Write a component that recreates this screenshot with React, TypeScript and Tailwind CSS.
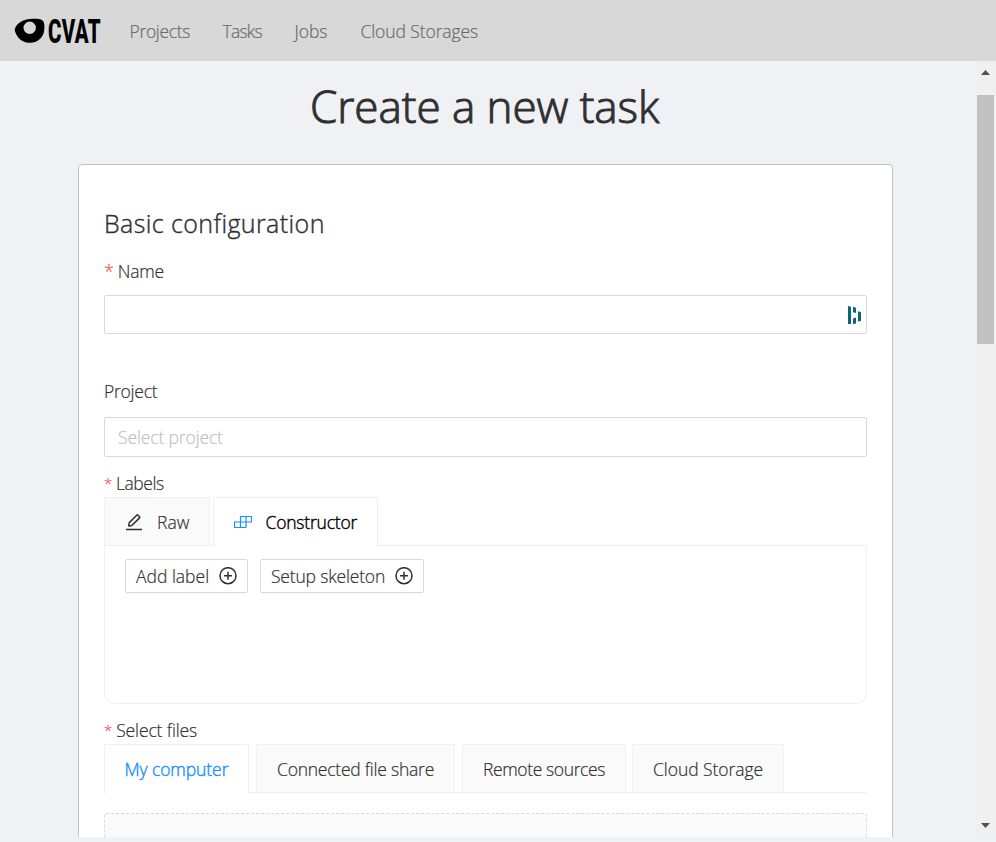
import React from "react";

const navItems = [
  { label: "Projects", cls: "w-[93px] tracking-[-0.33px]" },
  { label: "Tasks", cls: "w-[72px] tracking-[-0.75px]" },
  { label: "Jobs", cls: "w-[66px] tracking-[-0.1px]" },
  { label: "Cloud Storages", cls: "w-[140px] tracking-[-0.1px]" },
];

const fileTabs = [
  { label: "Connected file share", cls: "ml-[7px] w-[199px] tracking-[-0.23px]" },
  { label: "Remote sources", cls: "ml-[7px] w-[164px] tracking-[-0.38px]" },
  { label: "Cloud Storage", cls: "ml-[6px] w-[152px] tracking-[-0.05px]" },
];

function Logo() {
  return (
    <div className="flex h-[61px] w-[129.5px] items-start pl-[14px]">
      <svg className="mt-[18px] h-[26px] w-[31px] shrink-0" viewBox="0 0 31 26">
        <path
          fillRule="evenodd"
          d="M1 10.5C3 5 9 1.6 16 1C21 .6 26 .8 28.3 2.2C30.4 3.6 30.7 8 30.2 12.2C29.5 19.5 23.5 24.8 16 24.8C8.5 24.8 3.2 20.3 1 13.2C.6 12.2 .7 11.4 1 10.5ZM15.7 3.6A6.2 6.2 0 1 0 15.7 16A6.2 6.2 0 1 0 15.7 3.6Z"
        />
      </svg>
      <span className="ml-[3px] mt-[12.5px] origin-left scale-x-[0.62] font-[Roboto] text-[33px] font-extrabold leading-[38px] tracking-[0.5px] text-black">
        CVAT
      </span>
    </div>
  );
}

function PlusCircle() {
  return (
    <svg className="h-[18px] w-[18px] shrink-0" viewBox="0 0 18 18" fill="none" stroke="#303030" strokeWidth="1.5">
      <circle cx="9" cy="8.7" r="8" />
      <path d="M9 4.7v8M5 8.7h8" />
    </svg>
  );
}

function Required({ large = false }: { large?: boolean }) {
  return large ? (
    <span className="mr-[4px] text-[18px] text-[#ff4d4f]">*</span>
  ) : (
    <span className="mr-[4px] text-[15px] text-[#ff4d4f]">*</span>
  );
}

function Scrollbar() {
  return (
    <div className="flex w-[21px] shrink-0 flex-col bg-[#f0f0f0] pl-[2px]">
      <div className="flex h-[34px] justify-center pr-[2px] pt-[9px]">
        <svg className="h-[5px] w-[9px]" viewBox="0 0 9 5"><path d="M0 5L4.5 0L9 5Z" fill="#505050" /></svg>
      </div>
      <div className="h-[249px] w-[17px] bg-[#c1c1c1]" />
      <div className="mt-auto flex h-[15px] justify-center pr-[2px]">
        <svg className="mt-px h-[5px] w-[9px]" viewBox="0 0 9 5"><path d="M0 0L4.5 5L9 0Z" fill="#505050" /></svg>
      </div>
    </div>
  );
}

export default function App() {
  return (
    <div className="h-[842px] w-[996px] overflow-hidden bg-[#f0f1f5] font-['Open_Sans','Noto_Sans',sans-serif] text-[17.5px] font-light text-[#303030] [-webkit-text-stroke-width:0.2px]">
      <header className="flex h-[61px] bg-[#d8d8d8]">
        <Logo />
        <nav className="flex pt-[19px] leading-[25px] text-[#6a6a6a]">
          {navItems.map((n) => (
            <a key={n.label} className={`whitespace-nowrap ${n.cls}`}>{n.label}</a>
          ))}
        </nav>
      </header>

      <div className="flex h-[776px] overflow-hidden">
        <main className="w-[975px] shrink-0 pl-[78px]">
          <h1 className="h-[103px] pl-[232px] pt-[15px] text-[44px] leading-[60px] tracking-[-0.05px] [-webkit-text-stroke-width:1px]">
            <span className="whitespace-nowrap">Create a new task</span>
          </h1>
          <section className="h-[900px] w-[815px] rounded-[4px] border border-[#c1c1c1] bg-white px-[25px] pt-[40px]">
            <h2 className="h-[53px] whitespace-nowrap text-[25px] leading-[36px] tracking-[0.4px] [-webkit-text-stroke-width:0.4px]">Basic configuration</h2>
            <div className="flex h-[37px] leading-[26px] tracking-[-0.2px]"><Required large />Name</div>
            <div className="flex h-[39px] items-center justify-end rounded-[2px] border border-[#d9d9d9] pr-[4px]">
              <svg className="h-[20px] w-[15px]" viewBox="0 0 15 20" fill="#0e6478">
                <path d="M1 1L4 1.7V19H1ZM6 1.7L9 2.8V8L6 7.3ZM11 6.2L14 7.2V15.8L11 16.7ZM6 13.4L9 12.6V18.4L6 19Z" />
              </svg>
            </div>
            <div className="mt-[44px] h-[39px] leading-[26px] tracking-[-0.25px]">Project</div>
            <div className="h-[40px] rounded-[2px] border border-[#d9d9d9] pl-[13px] leading-[39px] tracking-[-0.13px] text-[#bfbfbf]">Select project</div>
            <div className="mt-[13px] flex h-[27px] leading-[26px] tracking-[-0.4px]"><Required />Labels</div>

            <div className="flex h-[49px]">
              <div className="flex w-[106px] items-center rounded-t-[2px] border border-[#f0f0f0] bg-[#fafafa] pl-[20px]">
                <svg className="h-[18px] w-[18px] shrink-0" viewBox="0 0 18 18" fill="none" stroke="#303030" strokeWidth="1.5">
                  <path d="M1 16.5h16M3.5 13.2L4.3 9.6L11.7 2.2Q12.3 1.6 13 2.2L14.5 3.7Q15 4.3 14.5 4.9L7 12.4L3.5 13.2" />
                </svg>
                <span className="ml-[14px] pt-px">Raw</span>
              </div>
              <div className="w-[3px] border-b border-[#f0f0f0]" />
              <div className="flex w-[165px] items-center rounded-t-[2px] border border-b-0 border-[#f0f0f0] bg-white pl-[20px] text-black [-webkit-text-stroke-width:0.4px]">
                <svg className="h-[14px] w-[18px] shrink-0" viewBox="0 0 18 14" fill="none" stroke="#1890ff" strokeWidth="1.2">
                  <path d="M6.5 1.5h11v5.5h-11ZM12 1.5v5.5M.5 7h11.5v5.5h-11.5ZM6.5 7v5.5" />
                </svg>
                <span className="ml-[13.5px] whitespace-nowrap tracking-[-0.2px]">Constructor</span>
              </div>
              <div className="flex-1 border-b border-[#f0f0f0]" />
            </div>
            <div className="flex h-[158px] gap-[12px] rounded-b-[10px] border border-t-0 border-[#f0f0f0] pl-[20px] pt-[13px]">
              <button className="flex h-[34px] w-[123px] items-center rounded-[2px] border border-[#d9d9d9] pl-[10px] shadow-[0_2px_0_rgba(0,0,0,0.015)]">
                <span className="w-[83px] shrink-0 whitespace-nowrap text-left">Add label</span><PlusCircle />
              </button>
              <button className="flex h-[34px] w-[164px] items-center rounded-[2px] border border-[#d9d9d9] pl-[10px] shadow-[0_2px_0_rgba(0,0,0,0.015)]">
                <span className="w-[124px] shrink-0 whitespace-nowrap text-left tracking-[-0.18px]">Setup skeleton</span><PlusCircle />
              </button>
            </div>

            <div className="mt-[13px] flex h-[27px] leading-[26px] tracking-[-0.12px]"><Required />Select files</div>
            <div className="flex h-[49px] border-b border-[#f0f0f0] leading-[49px]">
              <div className="-mb-px w-[145px] whitespace-nowrap rounded-t-[2px] border border-b-0 border-[#f0f0f0] bg-white pl-[19.5px] tracking-[-0.08px] text-[#1890ff] [-webkit-text-stroke-width:0.4px]">My computer</div>
              {fileTabs.map((t) => (
                <div key={t.label} className={`whitespace-nowrap rounded-t-[2px] border border-b-0 border-[#f0f0f0] bg-[#fafafa] pl-[20px] ${t.cls}`}>{t.label}</div>
              ))}
            </div>
            <div className="mt-[20px] h-[120px] rounded-[2px] border border-dashed border-[#d9d9d9] bg-[#fafafa]" />
          </section>
        </main>
        <Scrollbar />
      </div>
    </div>
  );
}
